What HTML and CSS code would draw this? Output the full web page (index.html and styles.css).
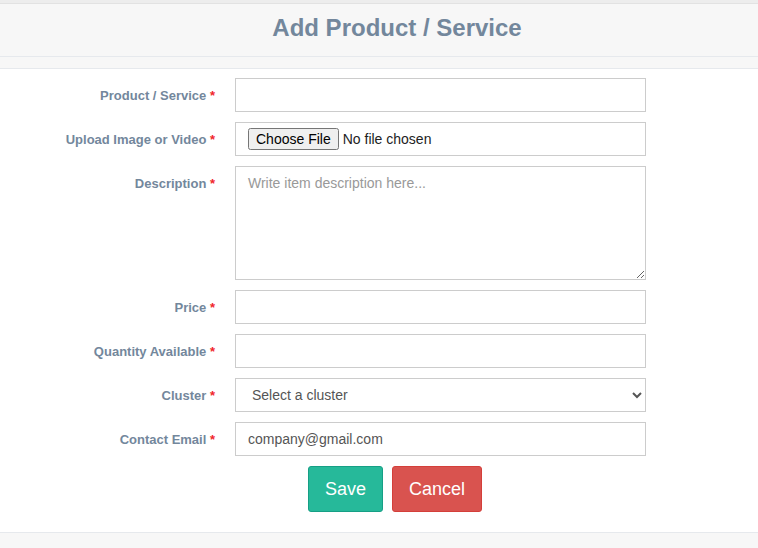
FILE: index.html
```html
<!DOCTYPE html>
<html>
<head>
<meta charset="utf-8">
<link rel="stylesheet" href="styles.css">
</head>
<body>
<div class="topband"></div>
<header class="head">
  <h1 class="title">Add Product / Service</h1>
</header>
<div class="subband"></div>
<main class="panel">
  <form class="form">
    <label class="lbl">Product / Service <span class="req">*</span></label>
    <input class="ctl" type="text">

    <label class="lbl">Upload Image or Video <span class="req">*</span></label>
    <div class="ctl filebox"><input class="file" type="file"></div>

    <label class="lbl">Description <span class="req">*</span></label>
    <textarea class="ctl area" placeholder="Write item description here..."></textarea>

    <label class="lbl">Price <span class="req">*</span></label>
    <input class="ctl" type="text">

    <label class="lbl">Quantity Available <span class="req">*</span></label>
    <input class="ctl" type="text">

    <label class="lbl">Cluster <span class="req">*</span></label>
    <select class="ctl sel"><option>Select a cluster</option></select>

    <label class="lbl">Contact Email <span class="req">*</span></label>
    <input class="ctl" type="text" value="company@gmail.com">

    <div class="actions">
      <button class="btn save" type="button">Save</button>
      <button class="btn cancel" type="button">Cancel</button>
    </div>
  </form>
</main>
<footer class="foot"></footer>
</body>
</html>
```
FILE: styles.css
```css
html, body {
  margin: 0;
  padding: 0;
}
body {
  background: #f7f7f7;
  font-family: "Liberation Sans", Arial, sans-serif;
  color: #73879c;
  width: 758px;
  height: 548px;
  overflow: hidden;
}
.topband {
  height: 3px;
  background: #ededed;
  border-bottom: 1px solid #e2e2e2;
}
.head {
  height: 52px;
  background: #f7f7f7;
  border-bottom: 1px solid #e6e9ed;
  display: flex;
  align-items: center;
  justify-content: center;
}
.title {
  margin: 0;
  font-size: 24px;
  font-weight: bold;
  color: #73879c;
  line-height: 28px;
  padding-left: 36px;
  padding-bottom: 4px;
}
.subband {
  height: 11px;
  background: #f7f7f7;
  border-bottom: 1px solid #e6e9ed;
}
.panel {
  background: #fff;
  height: 464px;
  border-bottom: 1px solid #e6e9ed;
  box-sizing: border-box;
  padding-top: 9px;
}
.form {
  display: grid;
  grid-template-columns: 215px 411px;
  column-gap: 20px;
  row-gap: 10px;
  margin: 0;
}
.lbl {
  text-align: right;
  font-size: 13px;
  font-weight: bold;
  color: #73879c;
  padding-top: 10px;
  line-height: 15px;
}
.req {
  color: #f0262b;
}
.ctl {
  box-sizing: border-box;
  width: 411px;
  height: 34px;
  margin: 0;
  border: 1px solid #cccccc;
  border-radius: 0;
  background: #fff;
  font-family: "Liberation Sans", Arial, sans-serif;
  font-size: 14px;
  color: #555;
  padding: 6px 12px;
  outline: none;
}
.filebox {
  display: flex;
  align-items: center;
  padding: 0 12px;
}
.file {
  font-family: "Liberation Sans", Arial, sans-serif;
  font-size: 14px;
  color: #222;
}
.area {
  height: 114px;
  resize: vertical;
  display: block;
  padding-top: 8px;
}
.area::placeholder {
  color: #999;
}
.sel {
  padding: 6px 12px;
  color: #555;
}
.actions {
  grid-column: 1 / span 2;
  display: flex;
  gap: 9px;
  padding-left: 308px;
}
.btn {
  font-family: "Liberation Sans", Arial, sans-serif;
  font-size: 18px;
  color: #fff;
  height: 46px;
  border-radius: 3px;
  padding: 0;
  cursor: pointer;
}
.save {
  width: 75px;
  background: #26b99a;
  border: 1px solid #169f85;
}
.cancel {
  width: 90px;
  background: #d9534f;
  border: 1px solid #d43f3a;
}
.foot {
  height: 15px;
  background: #f7f7f7;
}
```
